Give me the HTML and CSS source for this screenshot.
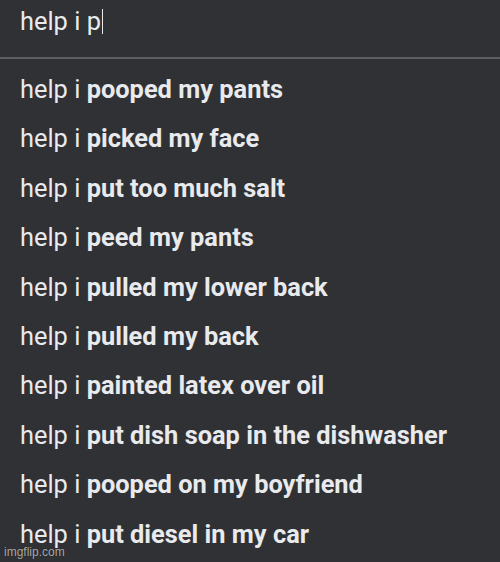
FILE: index.html
```html
<!DOCTYPE html>
<html>
<head>
<meta charset="utf-8">
<link rel="stylesheet" href="styles.css">
</head>
<body>
<div class="box">
  <div class="input"><span class="typed">help i p</span><span class="caret"></span></div>
  <div class="divider"></div>
  <ul class="list">
    <li>help i <b>pooped my pants</b></li>
    <li>help i <b>picked my face</b></li>
    <li>help i <b>put too much salt</b></li>
    <li>help i <b>peed my pants</b></li>
    <li>help i <b>pulled my lower back</b></li>
    <li>help i <b>pulled my back</b></li>
    <li>help i <b>painted latex over oil</b></li>
    <li>help i <b>put dish soap in the dishwasher</b></li>
    <li>help i <b>pooped on my boyfriend</b></li>
    <li>help i <b>put diesel in my car</b></li>
  </ul>
  <div class="mark">imgflip.com</div>
</div>
</body>
</html>
```
FILE: styles.css
```css
html, body {
  margin: 0;
  padding: 0;
  background: #303134;
}
.box {
  position: relative;
  width: 500px;
  height: 562px;
  overflow: hidden;
  background: #303134;
  font-family: Roboto, "Liberation Sans", Arial, sans-serif;
  font-size: 25.4px;
  color: #e8eaed;
}
.input {
  height: 57px;
  box-sizing: border-box;
  padding: 6px 0 0 20px;
  line-height: 30px;
  display: flex;
  align-items: flex-start;
}
.caret {
  display: inline-block;
  width: 1px;
  height: 25px;
  background: #e8eaed;
  margin-top: 3px;
  margin-left: 1px;
}
.divider {
  height: 2px;
  background: #5c5e62;
}
.list {
  list-style: none;
  margin: 0;
  padding: 6px 0 0 20px;
}
.list li {
  line-height: 49.4px;
  height: 49.4px;
  white-space: nowrap;
}
.list b {
  font-weight: 700;
}
.mark {
  position: absolute;
  left: 4px;
  bottom: 3px;
  font-family: "Liberation Sans", Arial, sans-serif;
  font-size: 12px;
  color: rgba(220, 220, 220, 0.75);
  text-shadow: 0 0 1px rgba(0,0,0,0.6);
}
```
